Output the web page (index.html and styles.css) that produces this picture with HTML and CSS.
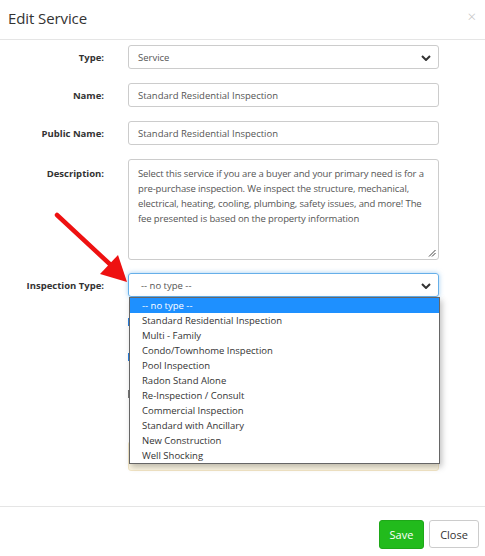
FILE: index.html
```html
<!DOCTYPE html>
<html>
<head>
<meta charset="utf-8">
<link rel="stylesheet" href="styles.css">
</head>
<body>
<div class="modal">
  <div class="modal-header">
    <h4 class="title">Edit Service</h4>
    <span class="close-x">×</span>
  </div>
  <div class="modal-body">
    <div class="row">
      <label class="lbl">Type:</label>
      <div class="select"><span>Service</span>
        <svg class="chev" viewBox="0 0 10 6" width="10" height="6"><path d="M1 1l4 4 4-4" fill="none" stroke="#333" stroke-width="2"/></svg>
      </div>
    </div>
    <div class="row">
      <label class="lbl">Name:</label>
      <div class="input">Standard Residential Inspection</div>
    </div>
    <div class="row">
      <label class="lbl">Public Name:</label>
      <div class="input">Standard Residential Inspection</div>
    </div>
    <div class="row top">
      <label class="lbl">Description:</label>
      <div class="textarea">Select this service if you are a buyer and your primary need is for a pre-purchase inspection. We inspect the structure, mechanical, electrical, heating, cooling, plumbing, safety issues, and more! The fee presented is based on the property information
        <svg class="grip" viewBox="0 0 8 8" width="8" height="8"><path d="M1 7.5L7.5 1M4 7.5L7.5 4" stroke="#444" stroke-width="1"/></svg>
      </div>
    </div>
    <div class="row">
      <label class="lbl">Inspection Type:</label>
      <div class="select focus"><span>-- no type --</span>
        <svg class="chev" viewBox="0 0 10 6" width="10" height="6"><path d="M1 1l4 4 4-4" fill="none" stroke="#333" stroke-width="2"/></svg>
        <ul class="list">
          <li class="sel">-- no type --</li>
          <li>Standard Residential Inspection</li>
          <li>Multi - Family</li>
          <li>Condo/Townhome Inspection</li>
          <li>Pool Inspection</li>
          <li>Radon Stand Alone</li>
          <li>Re-Inspection / Consult</li>
          <li>Commercial Inspection</li>
          <li>Standard with Ancillary</li>
          <li>New Construction</li>
          <li>Well Shocking</li>
        </ul>
      </div>
    </div>
    <div class="row">
      <span></span>
      <div class="extras">
        <span class="chk blue"></span>
        <span class="chk blue"></span>
        <span class="chk gray"></span>
        <div class="note"></div>
      </div>
    </div>
  </div>
  <div class="modal-footer">
    <button class="btn save">Save</button>
    <button class="btn close">Close</button>
  </div>
  <svg class="arrow" width="90" height="90" viewBox="0 0 90 90">
    <line x1="3" y1="3" x2="60" y2="56" stroke="#ee1111" stroke-width="4.5" stroke-linecap="round"/>
    <polygon points="73,70 46,62 64,43" fill="#ee1111"/>
  </svg>
</div>
</body>
</html>
```
FILE: styles.css
```css
* { box-sizing: border-box; }
html, body { margin: 0; padding: 0; background: #fff; }
body { font-family: "Open Sans", "Noto Sans", sans-serif; color: #333; font-size: 10px; }
.modal { position: relative; width: 485px; height: 556px; }
.modal-header { height: 40px; border-bottom: 1px solid #e5e5e5; display: flex; align-items: center; justify-content: space-between; padding: 0 9px 0 8px; }
.title { margin: 0; font-weight: 400; font-size: 15px; color: #333; letter-spacing: -0.1px; padding-bottom: 3px; }
.close-x { color: #c4c4c4; font-size: 15px; font-weight: 300; padding-bottom: 7px; }
.modal-body { padding: 5px 46px 0 0; height: 466px; }
.row { display: grid; grid-template-columns: 104px 311px; column-gap: 24px; align-items: center; margin-bottom: 14px; }
.row.top { align-items: start; margin-bottom: 13px; }
.lbl { text-align: right; font-weight: 700; font-size: 9.5px; color: #333; }
.row.top .lbl { padding-top: 8px; }
.select, .input { position: relative; height: 24px; border: 1px solid #ccc; border-radius: 3px; display: flex; align-items: center; padding: 0 12px 0 9px; color: #555; font-size: 9.5px; }
.select .chev { position: absolute; right: 7px; top: 9px; }
.select.focus { border-color: #66afe9; box-shadow: 0 0 5px rgba(102,175,233,0.6); padding-left: 12px; }
.textarea { position: relative; height: 101px; border: 1px solid #ccc; border-radius: 3px; padding: 6px 3px 0 9px; color: #555; font-size: 9.5px; line-height: 15px; letter-spacing: -0.12px; }
.grip { position: absolute; right: 2px; bottom: 2px; }
.list { position: absolute; left: 0; top: 23px; width: 311px; margin: 0; padding: 0; list-style: none; background: #fff; border: 1px solid #666; box-shadow: 2px 3px 6px rgba(0,0,0,0.25); z-index: 5; }
.list li { height: 15px; line-height: 15px; padding-left: 12px; color: #333; font-size: 9.5px; }
.list li.sel { background: #1e90ff; color: #fff; }
.extras { position: relative; height: 163px; margin-top: -3px; }
.chk { position: absolute; left: 0; width: 3px; height: 8px; }
.chk.blue { background: #2a7fde; }
.chk.gray { background: #777; }
.chk:nth-child(1) { top: 10px; }
.chk:nth-child(2) { top: 45px; }
.chk:nth-child(3) { top: 82px; }
.note { position: absolute; left: 0; right: 0; bottom: 0; height: 30px; background: #fcf6e3; border: 1px solid #f3e6c6; border-radius: 3px; }
.modal-footer { border-top: 1px solid #e5e5e5; height: 50px; display: flex; justify-content: flex-end; align-items: flex-start; gap: 5px; padding: 13px 6px 0 0; }
.btn { font-family: "Open Sans", "Noto Sans", sans-serif; font-size: 11px; border-radius: 3px; height: 29px; padding: 0; }
.save { width: 45px; background: #22bb1c; border: 1px solid #1ea818; color: #fff; }
.close { width: 50px; background: #fff; border: 1px solid #ccc; color: #333; height: 28px; }
.arrow { position: absolute; left: 54px; top: 212px; }
```
